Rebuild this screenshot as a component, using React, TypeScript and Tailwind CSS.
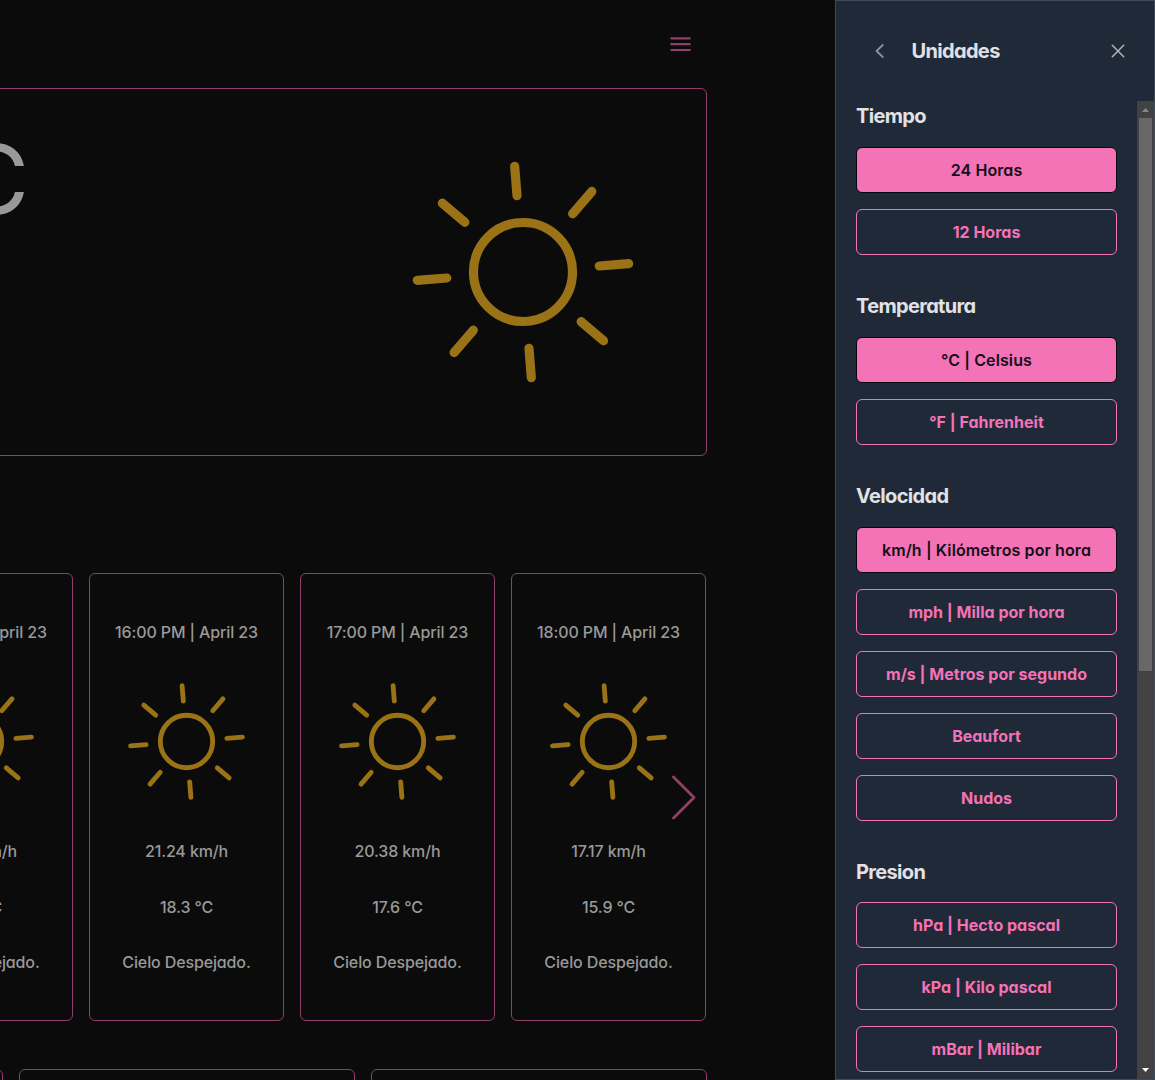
const angles = [0, 45, 90, 135, 180, 225, 270, 315];

function Sun({ className }: { className: string }) {
  return (
    <svg viewBox="-120 -120 240 240" className={className} fill="none" stroke="#997315" strokeWidth="9.2" strokeLinecap="round">
      <circle r="49.5" />
      {angles.map((a) => (
        <path key={a} d="M0-76.5V-106" transform={`rotate(${a - 4.5})`} />
      ))}
    </svg>
  );
}

const hours = [
  { time: "14:00 PM", wind: "21.96 km/h", temp: "18.9 °C" },
  { time: "15:00 PM", wind: "21.60 km/h", temp: "18.6 °C" },
  { time: "16:00 PM", wind: "21.24 km/h", temp: "18.3 °C" },
  { time: "17:00 PM", wind: "20.38 km/h", temp: "17.6 °C" },
  { time: "18:00 PM", wind: "17.17 km/h", temp: "15.9 °C" },
];

const sections = [
  { title: "Tiempo", options: ["24 Horas", "12 Horas"], selected: 0 },
  { title: "Temperatura", options: ["°C | Celsius", "°F | Fahrenheit"], selected: 0 },
  {
    title: "Velocidad",
    options: ["km/h | Kilómetros por hora", "mph | Milla por hora", "m/s | Metros por segundo", "Beaufort", "Nudos"],
    selected: 0,
  },
  { title: "Presion", options: ["hPa | Hecto pascal", "kPa | Kilo pascal", "mBar | Milibar"], selected: -1 },
];

function Forecast() {
  return (
    <main className="flex h-full w-[835px] justify-end overflow-hidden pr-32 text-[#999999]">
      <div className="flex w-[1040px] shrink-0 flex-col">
        <header className="flex h-[88px] shrink-0 items-center justify-end pr-4">
          <svg className="h-4 w-[21px]" viewBox="0 0 21 16" fill="none" stroke="#8f4069" strokeWidth="2.2" strokeLinecap="round">
            <path d="M1.300 2.300h18.400M1.300 8.200h18.400M1.300 14h18.400" />
          </svg>
        </header>
        <section className="flex h-[368px] shrink-0 items-start justify-between rounded-md border border-[#8f4069] pr-[63px]">
          <p className="mt-[42px] w-[361px] text-right text-8xl leading-none whitespace-nowrap">18.9 °C</p>
          <Sun className="mt-[63px] size-60" />
        </section>
        <section className="relative mt-[117px] flex shrink-0 gap-4">
          {hours.map((h) => (
            <article
              key={h.time}
              className="flex h-[448px] w-[195px] shrink-0 flex-col items-center rounded-md border border-[#8f4069] pt-[46px] font-[450] tracking-[-0.008em]"
            >
              <p>{h.time} | April 23</p>
              <Sun className="mt-[34px] size-[127px]" />
              <p className="mt-[34px]">{h.wind}</p>
              <p className="mt-8">{h.temp}</p>
              <p className="mt-[31px]">Cielo Despejado.</p>
            </article>
          ))}
          <svg className="absolute top-[202px] right-[11px] h-[46px] w-6" viewBox="0 0 24 46" fill="none" stroke="#8f4069" strokeWidth="2.8" strokeLinecap="round" strokeLinejoin="round">
            <path d="M1.500 2 22 22.500 1.500 43" />
          </svg>
        </section>
        <section className="mt-12 grid shrink-0 grid-cols-3 gap-4">
          <div className="h-40 rounded-md border border-[#8f4069]" />
          <div className="h-40 rounded-md border border-[#8f4069]" />
          <div className="h-40 rounded-md border border-[#8f4069]" />
        </section>
      </div>
    </main>
  );
}

function Scrollbar() {
  return (
    <div className="flex w-[17px] shrink-0 flex-col items-center bg-[#424242]">
      <svg className="h-[17px] w-[17px] shrink-0" viewBox="0 0 17 17" fill="#868686">
        <path d="M5 11h7L8.500 7z" />
      </svg>
      <div className="h-[553px] w-[13px] bg-[#686868]" />
      <svg className="mt-auto h-[17px] w-[17px] shrink-0" viewBox="0 0 17 17" fill="#ffffff">
        <path d="M5 6h7L8.500 10z" />
      </svg>
    </div>
  );
}

function Drawer() {
  return (
    <aside className="flex h-full w-80 shrink-0 flex-col border border-[#404b59] bg-[#202937] text-[#e0e2e6]">
      <header className="flex h-[100px] shrink-0 items-center pr-7 pl-[38px]">
        <svg className="h-4 w-[11px]" viewBox="0 0 11 16" fill="none" stroke="#8792a3" strokeWidth="1.8" strokeLinecap="round" strokeLinejoin="round">
          <path d="M8.800 2 2.500 8l6.300 6" />
        </svg>
        <h2 className="ml-[26.500px] text-xl font-bold tracking-[-0.033em]">Unidades</h2>
        <svg className="ml-auto size-4" viewBox="0 0 16 16" fill="none" stroke="#b0b4bb" strokeWidth="1.5" strokeLinecap="round">
          <path d="m2.300 2.300 11.400 11.400M13.700 2.300 2.300 13.700" />
        </svg>
      </header>
      <div className="flex min-h-0 flex-1">
        <div className="flex flex-1 flex-col gap-9 overflow-hidden px-5">
          {sections.map((s) => (
            <section key={s.title} className="group flex shrink-0 flex-col">
              <h3 className="mb-4 text-xl leading-[30px] font-bold tracking-[-0.033em] group-last:mb-[15px]">{s.title}</h3>
              <div className="flex flex-col gap-4">
                {s.options.map((o, i) => (
                  <button
                    key={o}
                    className={
                      i === s.selected
                        ? "h-[46px] rounded-md border border-[#05060f] bg-[#f472b6] font-semibold tracking-[0.1px] text-[#111018]"
                        : "h-[46px] rounded-md border border-[#f472b6] font-bold text-[#f472b6]"
                    }
                  >
                    {o}
                  </button>
                ))}
              </div>
            </section>
          ))}
        </div>
        <Scrollbar />
      </div>
    </aside>
  );
}

export default function App() {
  return (
    <div className="flex h-[1080px] w-[1155px] overflow-hidden bg-[#0b0b0b] [font-family:Inter,'Liberation_Sans',sans-serif] [font-feature-settings:'cv11']">
      <Forecast />
      <Drawer />
    </div>
  );
}
